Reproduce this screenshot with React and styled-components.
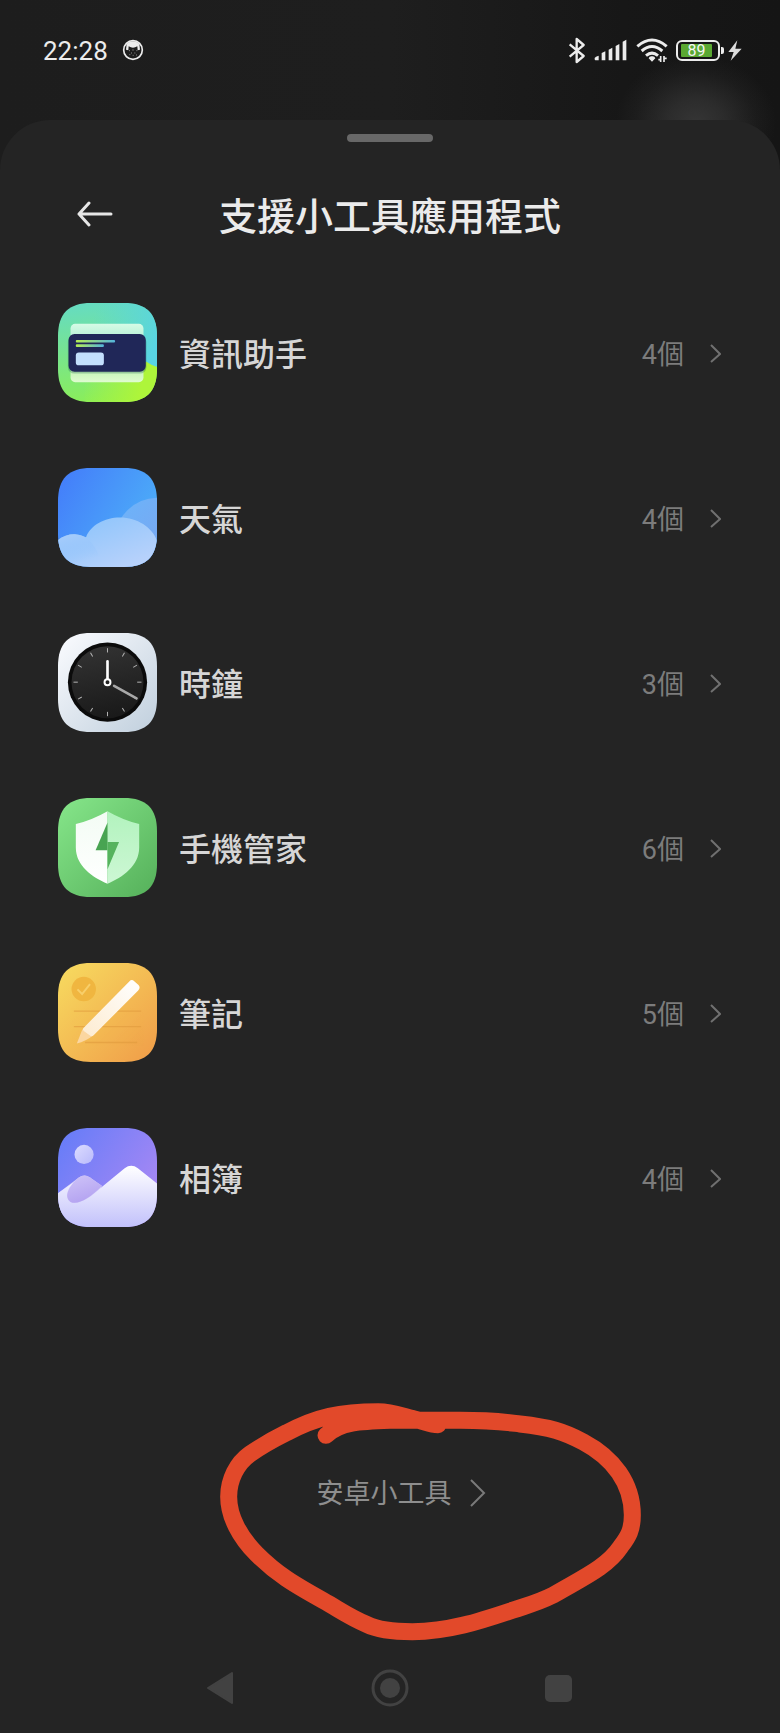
import React from 'react';
import styled, { createGlobalStyle } from 'styled-components';

const GlobalStyle = createGlobalStyle`
  * {
    box-sizing: border-box;
  }

  body {
    margin: 0;
    background: #181818;
    font-family: Roboto, 'Noto Sans CJK TC', sans-serif;
  }

  button {
    border: 0;
    padding: 0;
    background: none;
    font: inherit;
    color: inherit;
    cursor: pointer;
  }

  svg {
    display: block;
    flex: none;
  }
`;

const Page = styled.div`
  min-height: 100vh;
  display: flex;
  flex-direction: column;
  background:
    radial-gradient(ellipse 80px 66px at calc(100% - 84px) 122px, #353535 0%, rgba(53, 53, 53, 0.7) 35%, rgba(53, 53, 53, 0.2) 75%, rgba(53, 53, 53, 0) 100%),
    linear-gradient(90deg, #1d1d1d 0%, #1e1e1e 50%, #171717 80%, #151515 100%);
`;

const StatusBar = styled.header`
  height: 120px;
  padding: 36px 38px 0 43px;
  display: flex;
  justify-content: space-between;
  align-items: flex-start;
  color: #ececec;
`;

const StatusGroup = styled.div`
  height: 28px;
  display: flex;
  align-items: center;
  gap: ${(props) => props.$gap}px;
`;

const Time = styled.time`
  padding-top: 1px;
  font-size: 26px;
  line-height: 28px;
`;

const Battery = styled.div`
  display: flex;
  align-items: center;
  gap: 1px;

  &::after {
    content: '';
    width: 3px;
    height: 7px;
    border-radius: 0 2px 2px 0;
    background: #ececec;
  }
`;

const BatteryBody = styled.div`
  width: 44px;
  height: 21px;
  padding: 2px 6px 2px 3px;
  border: 2px solid #ececec;
  border-radius: 6px;
`;

const BatteryLevel = styled.div`
  height: 13px;
  border-radius: 1px;
  background: #5aa832;
  color: #f4f4f4;
  font-size: 16px;
  line-height: 14px;
  text-align: center;
`;

const Sheet = styled.main`
  flex: 1;
  display: flex;
  flex-direction: column;
  padding-top: 14px;
  border-radius: 50px 50px 0 0;
  background: #242424;
`;

const Handle = styled.div`
  width: 86px;
  height: 8px;
  margin: 0 auto;
  border-radius: 4px;
  background: #686868;
`;

const TitleBar = styled.div`
  display: grid;
  grid-template-columns: 40px 1fr 40px;
  align-items: center;
  margin-top: 40px;
  padding: 0 75px;
  color: #ebebeb;
`;

const Title = styled.h1`
  margin: 0;
  padding-top: 5px;
  font-size: 38px;
  line-height: 60px;
  font-weight: 500;
  text-align: center;
`;

const AppList = styled.ul`
  list-style: none;
  margin: 0;
  padding: 56px 59px 0 58px;
  display: grid;
  gap: 66px;
`;

const AppRow = styled.button`
  width: 100%;
  display: flex;
  align-items: center;
  text-align: left;
`;

const AppName = styled.span`
  flex: 1;
  margin-left: 22px;
  padding-top: 4px;
  color: #d6d6d6;
  font-size: 32px;
  line-height: 40px;
  font-weight: 500;
`;

const Count = styled.span`
  margin-right: 26px;
  padding-top: 4px;
  color: #7c7c7c;
  font-size: 27px;
  line-height: 40px;
`;

const Footer = styled.div`
  position: relative;
  display: flex;
  justify-content: center;
  margin-top: auto;
  padding: 60px 0 131px 22px;
`;

const MoreLink = styled.a`
  display: flex;
  align-items: center;
  gap: 18px;
  color: #8e8e8e;
  font-size: 27px;
  line-height: 36px;
  text-decoration: none;
`;

const MoreText = styled.span`
  padding-top: 3px;
`;

const Annotation = styled.svg`
  position: absolute;
  left: calc(50% - 190px);
  bottom: -17px;
  pointer-events: none;
`;

const NavBar = styled.nav`
  height: 90px;
  padding: 0 136px;
  display: grid;
  grid-template-columns: repeat(3, 1fr);
  place-items: center;
`;

const SQUIRCLE =
  'M0 100C0 32 32 0 100 0H200C268 0 300 32 300 100V200C300 268 268 300 200 300H100C32 300 0 268 0 200Z';

const Gradient = ({ id, from, to, x1 = 0, y1 = 0, x2 = 1, y2 = 1 }) => (
  <linearGradient id={id} x1={x1} y1={y1} x2={x2} y2={y2}>
    <stop offset="0" stopColor={from} />
    <stop offset="1" stopColor={to} />
  </linearGradient>
);

const AppIcon = ({ name, children }) => (
  <svg width="99" height="99" viewBox="0 0 300 300" aria-hidden="true">
    <clipPath id={`${name}-clip`}>
      <path d={SQUIRCLE} />
    </clipPath>
    <g clipPath={`url(#${name}-clip)`}>{children}</g>
  </svg>
);

const AssistantIcon = () => (
  <AppIcon name="assistant">
    <Gradient id="as-bg" from="#66dcc0" to="#8bee58" x1={0.4} x2={0.5} />
    <linearGradient id="as-blue" x1="0.3" y1="0.4" x2="1" y2="0.6">
      <stop offset="0" stopColor="#58d4e4" stopOpacity="0" />
      <stop offset="1" stopColor="#58d4e4" />
    </linearGradient>
    <linearGradient id="as-lime" x1="0" y1="0.4" x2="1" y2="0.5">
      <stop offset="0" stopColor="#aef53a" stopOpacity="0" />
      <stop offset="0.8" stopColor="#aef53a" />
    </linearGradient>
    <Gradient id="as-top" from="#d6fbe6" to="#a9ecd0" x2={0} />
    <Gradient id="as-bottom" from="#b4f3a4" to="#dffbd0" x2={0} />
    <Gradient id="as-line" from="#b6ee54" to="#54b4dc" y2={0} />
    <rect width="300" height="300" fill="url(#as-bg)" />
    <path d="M0 0H300V194Q286 190 270 180L0 120Z" fill="url(#as-blue)" />
    <path d="M80 300V190L268 178Q284 190 300 194V300Z" fill="url(#as-lime)" />
    <rect x="38" y="63" width="221" height="60" rx="14" fill="url(#as-top)" />
    <rect x="38" y="180" width="221" height="60" rx="14" fill="url(#as-bottom)" />
    <rect x="30" y="98" width="238" height="116" rx="20" fill="#1d5a50" opacity="0.3" />
    <rect x="32" y="94" width="234" height="114" rx="18" fill="#202758" />
    <rect x="54" y="112" width="119" height="8" rx="3" fill="url(#as-line)" />
    <rect x="54" y="125" width="85" height="8" rx="3" fill="url(#as-line)" />
    <rect x="54" y="150" width="85" height="39" rx="9" fill="#c3dffd" />
  </AppIcon>
);

const WeatherIcon = () => (
  <AppIcon name="weather">
    <Gradient id="we-bg" from="#437bfa" to="#4db0f8" y2={0.6} />
    <Gradient id="we-back" from="#6bb4fa" to="#78a8f2" x2={0.6} />
    <Gradient id="we-front" from="#8cc4fb" to="#bfd4fb" x1={0.2} />
    <linearGradient id="we-left" x1="0.4" y1="0" x2="0.7" y2="0.8">
      <stop offset="0" stopColor="#a4cbfb" />
      <stop offset="1" stopColor="#8cc0fb" stopOpacity="0" />
    </linearGradient>
    <rect width="300" height="300" fill="url(#we-bg)" />
    <path d="M180 170Q222 92 300 90V300H180Z" fill="url(#we-back)" />
    <path d="M0 218Q22 201 50 201Q70 202 85 210C98 174 140 150 188 150C240 150 286 180 300 220V300H0Z" fill="url(#we-front)" />
    <path d="M0 218Q22 201 50 201C86 202 108 228 122 262L122 300H0Z" fill="url(#we-left)" />
  </AppIcon>
);

const TICKS = [0, 30, 60, 90, 120, 150, 180, 210, 240, 270, 300, 330];

const ClockIcon = () => (
  <AppIcon name="clock">
    <Gradient id="cl-bg" from="#fbfcff" to="#c0cfdd" />
    <Gradient id="cl-face" from="#323232" to="#191919" x1={0.4} x2={0.6} />
    <rect width="300" height="300" fill="url(#cl-bg)" />
    <circle cx="150" cy="149" r="120" fill="#0b0b0b" />
    <circle cx="150" cy="149" r="109" fill="url(#cl-face)" />
    {TICKS.map((angle) => (
      <path
        key={angle}
        d="M150 46V59"
        stroke="#b4b4b4"
        strokeWidth="3"
        transform={`rotate(${angle} 150 149)`}
      />
    ))}
    <path d="M170 160L238 198" stroke="#a8a8a8" strokeWidth="8" strokeLinecap="round" />
    <path d="M150 138V86" stroke="#fff" strokeWidth="8" strokeLinecap="round" />
    <circle cx="150" cy="149" r="9" fill="#222" stroke="#fff" strokeWidth="6" />
  </AppIcon>
);

const SecurityIcon = () => (
  <AppIcon name="security">
    <Gradient id="se-bg" from="#86e68a" to="#55b05a" />
    <Gradient id="se-left" from="#f3fcf4" to="#ffffff" x2={0} />
    <Gradient id="se-right" from="#b2f3be" to="#cdf7d4" x2={0} />
    <rect width="300" height="300" fill="url(#se-bg)" />
    <path d="M150 40Q105 66 54 79V150C54 206 104 240 150 260Z" fill="url(#se-left)" />
    <path d="M150 40Q195 66 246 79V150C246 206 196 240 150 260Z" fill="url(#se-right)" />
    <path d="M150 74L114 158H150Z" fill="#48a452" />
    <path d="M150 74V133H185L150 216Z" fill="#56b35e" />
  </AppIcon>
);

const NotesIcon = () => (
  <AppIcon name="notes">
    <Gradient id="no-bg" from="#f7dc60" to="#f09c48" />
    <Gradient id="no-pencil" from="#ffffff" to="#fdebd0" x1={1} x2={0} />
    <rect width="300" height="300" fill="url(#no-bg)" />
    <path d="M48 146H252M48 193H252M82 241H240" stroke="#e0993c" strokeWidth="4" opacity="0.6" />
    <circle cx="78" cy="79" r="37" fill="#f0b640" />
    <path d="M59 80L73 94L97 64" fill="none" stroke="#f8cf6a" strokeWidth="6" />
    <path d="M57 244L74 201L106 220Q84 238 57 244Z" fill="#fbd6a0" />
    <path d="M78 196L216 56Q223 48 231 55L244 67Q251 75 243 83L108 219Q102 225 96 219L78 206Q73 201 78 196Z" fill="url(#no-pencil)" />
  </AppIcon>
);

const GalleryIcon = () => (
  <AppIcon name="gallery">
    <Gradient id="ga-bg" from="#637cf8" to="#a988f4" y2={0.7} />
    <Gradient id="ga-sun" from="#dcdcff" to="#b9bafb" />
    <Gradient id="ga-hill" from="#ffffff" to="#c2c1fb" x2={0} />
    <Gradient id="ga-small" from="#cfc4f8" to="#b4a3f1" x2={0.4} />
    <rect width="300" height="300" fill="url(#ga-bg)" />
    <circle cx="79" cy="80" r="29" fill="url(#ga-sun)" />
    <path d="M0 198L62 151Q79 138 96 149L133 175L100 260H0Z" fill="#d2cafa" />
    <path d="M0 198L54 160C34 185 22 205 32 220C48 238 90 220 130 181L202 122Q222 107 242 122L300 168V300H0Z" fill="url(#ga-hill)" />
    <path d="M62 151Q79 138 96 149L133 176C94 215 60 234 38 224C16 208 32 176 62 151Z" fill="url(#ga-small)" />
  </AppIcon>
);

const FaceIcon = () => (
  <svg width="22" height="22" viewBox="0 0 66 66" aria-hidden="true">
    <circle cx="33" cy="33" r="28" fill="none" stroke="#ececec" strokeWidth="5" />
    <path d="M14 14Q33 0 52 14L54 32L47 34L46 22Q33 30 20 22L19 34L12 32Z" fill="#ececec" />
    <path d="M21 35H24M31 33H35M43 35H46M27 42H30M37 42H40M22 47H25M32 49H35M42 48H45" stroke="#8a8a8a" strokeWidth="3" />
  </svg>
);

const BluetoothIcon = () => (
  <svg width="18" height="27" viewBox="0 0 54 81" fill="none" stroke="#ececec" strokeWidth="7" aria-hidden="true">
    <path d="M5 22L47 57L26 75V6L47 24L5 59" strokeLinejoin="round" />
  </svg>
);

const SignalIcon = () => (
  <svg width="34" height="22" viewBox="0 0 102 66" fill="#ececec" aria-hidden="true">
    <path d="M2 57Q4 52 14 50V64H4Q1 62 2 57Z" />
    <path d="M23 42L34 37V64H23ZM44 32L55 26V64H44ZM65 21L76 15V64H65ZM86 8L97 2V64H86Z" />
  </svg>
);

const WifiIcon = () => (
  <svg width="32" height="24" viewBox="0 0 96 72" fill="none" stroke="#ececec" strokeWidth="9" aria-hidden="true">
    <path d="M4 25Q48 -13 92 25M17 39Q48 12 79 39M30 53Q48 38 66 53" />
    <path d="M48 55A9 9 0 0 0 38 61L48 71L58 61A9 9 0 0 0 48 55Z" fill="#ececec" stroke="none" />
    <path d="M74 54V72M84 54V72M67 65H74M84 61H92" strokeWidth="5" />
  </svg>
);

const BoltIcon = () => (
  <svg width="14" height="21" viewBox="0 0 42 63" fill="#dcdcdc" aria-hidden="true">
    <path d="M28 1L1 36H17L8 62L41 26H22Z" />
  </svg>
);

const Chevron = ({ size, color }) => (
  <svg
    width={size === 'large' ? 16 : 11}
    height={size === 'large' ? 28 : 20}
    viewBox={size === 'large' ? '0 0 16 28' : '0 0 11 20'}
    fill="none"
    stroke={color}
    strokeWidth="2"
    aria-hidden="true"
  >
    <path d={size === 'large' ? 'M1 1L14 14L1 27' : 'M1 2L10 11L1 19'} />
  </svg>
);

const apps = [
  { name: '資訊助手', count: 4, icon: <AssistantIcon /> },
  { name: '天氣', count: 4, icon: <WeatherIcon /> },
  { name: '時鐘', count: 3, icon: <ClockIcon /> },
  { name: '手機管家', count: 6, icon: <SecurityIcon /> },
  { name: '筆記', count: 5, icon: <NotesIcon /> },
  { name: '相簿', count: 4, icon: <GalleryIcon /> },
];

const App = () => {
  return (
    <Page lang="zh-Hant">
      <GlobalStyle />
      <StatusBar>
        <StatusGroup $gap={14}>
          <Time>22:28</Time>
          <FaceIcon />
        </StatusGroup>
        <StatusGroup $gap={8}>
          <BluetoothIcon />
          <SignalIcon />
          <WifiIcon />
          <StatusGroup $gap={4}>
            <Battery>
              <BatteryBody>
                <BatteryLevel>89</BatteryLevel>
              </BatteryBody>
            </Battery>
            <BoltIcon />
          </StatusGroup>
        </StatusGroup>
      </StatusBar>

      <Sheet>
        <Handle />
        <TitleBar>
          <button type="button" aria-label="返回">
            <svg width="40" height="28" viewBox="0 0 40 28" fill="none" stroke="#e6e6e6" strokeWidth="3" strokeLinecap="round" strokeLinejoin="round">
              <path d="M36 13H4M14 2L4 13L14 24" />
            </svg>
          </button>
          <Title>支援小工具應用程式</Title>
        </TitleBar>

        <AppList>
          {apps.map((app) => (
            <li key={app.name}>
              <AppRow type="button">
                {app.icon}
                <AppName>{app.name}</AppName>
                <Count>{app.count}個</Count>
                <Chevron color="#707070" />
              </AppRow>
            </li>
          ))}
        </AppList>

        <Footer>
          <MoreLink href="#android-widgets">
            <MoreText>安卓小工具</MoreText>
            <Chevron size="large" color="#7a7a7a" />
          </MoreLink>
          {/* hand-drawn ring around the link */}
          <Annotation
            width="460"
            height="280"
            viewBox="0 0 1380 840"
            fill="none"
            stroke="#e2492a"
            strokeWidth="51"
            strokeLinecap="round"
            strokeLinejoin="round"
            aria-hidden="true"
          >
            <path d="M378 166C420 126 480 124 570 121H780C880 121 910 126 960 132C1050 142 1090 154 1150 186C1240 234 1297 310 1297 405C1297 450 1285 470 1262 500C1220 562 1150 592 1060 645C1010 670 980 676 940 690C850 720 750 755 637 755C570 755 530 748 500 733C450 712 420 690 370 662C280 612 230 582 170 522C120 472 86 410 86 350C86 300 110 250 150 222C190 194 220 178 260 158C350 110 420 95 535 95C580 95 610 110 640 116C680 126 690 134 714 134" />
          </Annotation>
        </Footer>

        <NavBar>
          <button type="button" aria-label="Back">
            <svg width="28" height="34" viewBox="0 0 28 34" fill="#424242" stroke="#424242" strokeWidth="2" strokeLinejoin="round">
              <path d="M25 2V32L1 17Z" />
            </svg>
          </button>
          <button type="button" aria-label="Home">
            <svg width="38" height="38" viewBox="0 0 38 38">
              <circle cx="19" cy="19" r="17" fill="none" stroke="#424242" strokeWidth="3" />
              <circle cx="19" cy="19" r="10" fill="#424242" />
            </svg>
          </button>
          <button type="button" aria-label="Recents">
            <svg width="28" height="28" viewBox="0 0 28 28">
              <rect width="27" height="27" y="1" rx="5" fill="#424242" />
            </svg>
          </button>
        </NavBar>
      </Sheet>
    </Page>
  );
};

export default App;
